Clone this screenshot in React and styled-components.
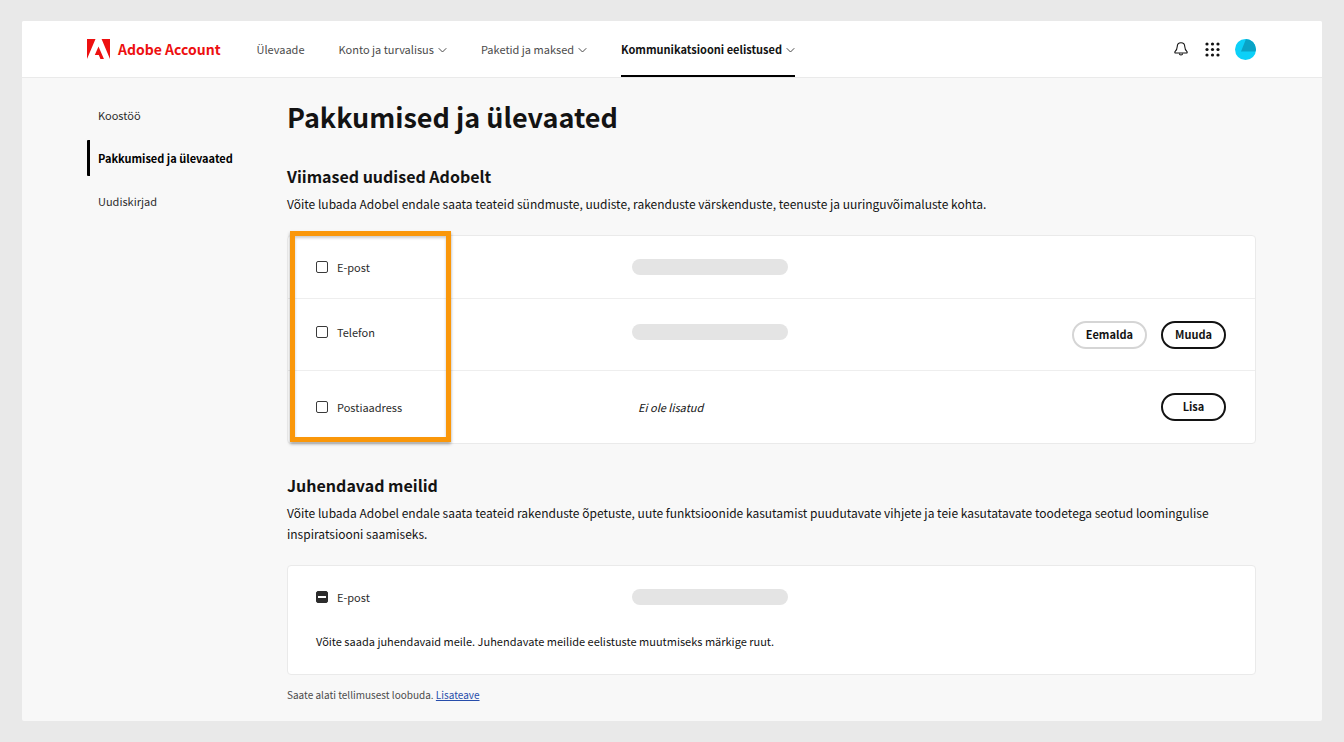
import React, { useEffect, useRef } from "react";
import styled, { createGlobalStyle } from "styled-components";

const GlobalStyle = createGlobalStyle`
  *, *::before, *::after { box-sizing: border-box; }
  body {
    margin: 0;
    background: #e9e9e9;
    color: #131313;
    font-family: "Noto Sans CJK SC", "Noto Sans", sans-serif;
    font-size: 11px;
    line-height: 20px;
  }
  h1, h2, p, ul { margin: 0; padding: 0; }
  ul { list-style: none; }
`;

const Page = styled.div`
  margin: 21px 22px;
  background: #f8f8f8;
  border-radius: 2px;
  overflow: hidden;
`;

const Header = styled.header`
  display: flex;
  align-items: center;
  height: 57px;
  padding: 0 66px 0 65px;
  background: #fff;
  border-bottom: 1px solid #eaeaea;
`;

const Brand = styled.a`
  display: flex;
  align-items: center;
  gap: 8px;
  color: #ed1010;
  font-size: 14px;
  font-weight: 700;
  text-decoration: none;
  white-space: nowrap;
`;

const Nav = styled.nav`
  display: flex;
  flex: 1;
  align-self: stretch;
  gap: 34px;
  margin-left: 36px;
`;

const NavLink = styled.a`
  display: flex;
  align-items: center;
  gap: 4px;
  padding-bottom: 1px;
  border-bottom: 2px solid ${(p) => (p.$active ? "#000" : "transparent")};
  border-top: 2px solid transparent;
  color: ${(p) => (p.$active ? "#131313" : "#4b4b4b")};
  font-weight: ${(p) => (p.$active ? 700 : 400)};
  text-decoration: none;
  white-space: nowrap;
`;

const Tools = styled.div`
  display: flex;
  align-items: center;
  gap: 15px;
`;

const IconButton = styled.button`
  display: flex;
  padding: 0;
  border: 0;
  background: none;
  color: #131313;
  cursor: pointer;
`;

const Columns = styled.div`
  display: grid;
  grid-template-columns: 200px minmax(0, 1fr);
  padding: 19px 66px 16px 65px;
`;

const SideNav = styled.nav`
  display: flex;
  flex-direction: column;
  align-items: flex-start;
  gap: 7px;
`;

const SideLink = styled.a`
  padding-left: 8px;
  border-left: 3px solid ${(p) => (p.$active ? "#000" : "transparent")};
  border-radius: 1px;
  color: ${(p) => (p.$active ? "#000" : "#2c2c2c")};
  font-weight: ${(p) => (p.$active ? 700 : 400)};
  line-height: 36px;
  text-decoration: none;
`;

const Title = styled.h1`
  font-size: 27px;
  line-height: 40px;
`;

const Section = styled.section`
  padding-top: 27px;
  & + & { padding-top: 29px; }
`;

const Heading = styled.h2`
  font-size: 16px;
  line-height: 24px;
`;

const Lead = styled.p`
  margin: 5px 0 21px;
  font-size: 12px;
  line-height: 21px;
`;

const Card = styled.div`
  position: relative;
  background: #fff;
  border: 1px solid #eaeaea;
  border-radius: 4px;
`;

const Highlight = styled.div`
  position: absolute;
  top: -5px;
  left: 2px;
  width: 161px;
  height: 211px;
  border: 5px solid #fa970a;
  box-shadow: 0 2px 3px rgba(0, 0, 0, 0.35), inset 0 2px 3px rgba(0, 0, 0, 0.2);
  pointer-events: none;
`;

const Row = styled.li`
  display: grid;
  grid-template-columns: 316px minmax(0, 1fr);
  align-items: ${(p) => (p.$tall ? "start" : "center")};
  min-height: ${(p) => p.$height}px;
  padding: ${(p) => (p.$tall ? 22 : 20)}px 29px ${(p) => (p.$tall ? 21 : 20)}px 28px;
  border-bottom: 1px solid #eeeeee;
  &:last-child { border-bottom: 0; }
`;

const CheckLabel = styled.label`
  display: flex;
  align-items: center;
  gap: 9px;
  color: #2c2c2c;
  line-height: 22px;
`;

const Checkbox = styled.input`
  appearance: none;
  display: grid;
  place-content: center;
  width: 12px;
  height: 12px;
  margin: 0;
  border: 1px solid #3a3a3a;
  border-radius: 2px;
  background: #fff;
  &:indeterminate { background: #2c2c2c; border-color: #2c2c2c; }
  &:indeterminate::before {
    content: "";
    width: 8px;
    height: 2px;
    background: #fff;
  }
`;

const Details = styled.div`
  display: flex;
  align-items: ${(p) => (p.$tall ? "flex-start" : "center")};
  justify-content: space-between;
`;

const ValueBox = styled.div`
  display: flex;
  align-items: center;
  height: 22px;
`;

const Redacted = styled.span`
  width: 156px;
  height: 16px;
  border-radius: 8px;
  background: #e4e4e4;
`;

const Missing = styled.em`
  padding-left: 6px;
`;

const Actions = styled.div`
  display: flex;
  gap: 14px;
`;

const PillButton = styled.button`
  min-width: 65px;
  height: 28px;
  padding: 0 12px 2px;
  border: 2px solid ${(p) => (p.$quiet ? "#d5d5d5" : "#131313")};
  border-radius: 14px;
  background: #fff;
  color: #131313;
  font: 700 11px/20px "Noto Sans CJK SC", "Noto Sans", sans-serif;
  cursor: pointer;
`;

const Note = styled.p`
  padding: 3px 28px 23px;
`;

const Footnote = styled.p`
  margin-top: 10px;
  font-size: 10px;
  color: #4b4b4b;
  a { color: #274dab; }
`;

function AdobeLogo() {
  return (
    <svg width="23" height="20" viewBox="0 0 30 26" aria-hidden="true" fill="currentColor">
      <path d="M19 0h11v26zM11.1 0H0v26zM15 9.6L22.1 26h-4.6l-2.1-5.2h-5.2z" />
    </svg>
  );
}

function Chevron() {
  return (
    <svg width="9" height="8" viewBox="0 0 9 8" aria-hidden="true" fill="none" stroke="#4b4b4b" strokeLinecap="round">
      <path d="M1 3.5L4.5 7L8 3.5" />
    </svg>
  );
}

function Bell() {
  return (
    <svg width="16" height="14" viewBox="0 0 16 14" aria-hidden="true" fill="none" stroke="currentColor" strokeWidth="1.1" strokeLinejoin="round">
      <path d="M7 .8C4.6.8 3.3 2.5 3.2 4.7 3.1 7.2 2.8 7.8 1.2 9.4.5 10.2.8 11 1.600 11h10.800c.8 0 1.100-.8.4-1.600-1.600-1.600-1.900-2.200-2-4.700C10.700 2.500 9.400.8 7 .8z" />
      <path d="M5.4 11.4a1.6 1.6 0 0 0 3.200 0" />
    </svg>
  );
}

function Dots() {
  const at = [2, 7.5, 13];
  return (
    <svg width="15" height="15" viewBox="0 0 15 15" aria-hidden="true" fill="currentColor">
      {at.map((y) => at.map((x) => <circle key={`${x}-${y}`} cx={x} cy={y} r="1.6" />))}
    </svg>
  );
}

function Avatar() {
  return (
    <svg width="21" height="21" viewBox="0 0 21 21" aria-hidden="true">
      <defs>
        <clipPath id="avatar"><circle cx="10.5" cy="10.5" r="10.5" /></clipPath>
      </defs>
      <g clipPath="url(#avatar)">
        <path fill="#0cd0f8" d="M0 0h21v21H0z" />
        <path fill="#0aa3c6" d="M11 0h10v12.5H6z" />
      </g>
    </svg>
  );
}

function CheckField({ label, mixed }) {
  const ref = useRef(null);
  useEffect(() => {
    ref.current.indeterminate = Boolean(mixed);
  }, [mixed]);
  return (
    <CheckLabel>
      <Checkbox ref={ref} type="checkbox" />
      {label}
    </CheckLabel>
  );
}

export default function App() {
  return (
    <>
      <GlobalStyle />
      <Page>
        <Header>
          <Brand href="#"><AdobeLogo />Adobe Account</Brand>
          <Nav>
            <NavLink href="#">Ülevaade</NavLink>
            <NavLink href="#">Konto ja turvalisus<Chevron /></NavLink>
            <NavLink href="#">Paketid ja maksed<Chevron /></NavLink>
            <NavLink href="#" $active>Kommunikatsiooni eelistused<Chevron /></NavLink>
          </Nav>
          <Tools>
            <IconButton aria-label="Teavitused"><Bell /></IconButton>
            <IconButton aria-label="Rakendused"><Dots /></IconButton>
            <IconButton aria-label="Profiil"><Avatar /></IconButton>
          </Tools>
        </Header>
        <Columns>
          <SideNav>
            <SideLink href="#">Koostöö</SideLink>
            <SideLink href="#" $active>Pakkumised ja ülevaated</SideLink>
            <SideLink href="#">Uudiskirjad</SideLink>
          </SideNav>
          <main>
            <Title>Pakkumised ja ülevaated</Title>
            <Section>
              <Heading>Viimased uudised Adobelt</Heading>
              <Lead>
                Võite lubada Adobel endale saata teateid sündmuste, uudiste, rakenduste värskenduste, teenuste ja uuringuvõimaluste kohta.
              </Lead>
              <Card>
                <ul>
                  <Row $height={63}>
                    <CheckField label="E-post" />
                    <Details><ValueBox><Redacted /></ValueBox></Details>
                  </Row>
                  <Row $height={72} $tall>
                    <CheckField label="Telefon" />
                    <Details $tall>
                      <ValueBox><Redacted /></ValueBox>
                      <Actions>
                        <PillButton $quiet>Eemalda</PillButton>
                        <PillButton>Muuda</PillButton>
                      </Actions>
                    </Details>
                  </Row>
                  <Row $height={72}>
                    <CheckField label="Postiaadress" />
                    <Details>
                      <Missing>Ei ole lisatud</Missing>
                      <PillButton>Lisa</PillButton>
                    </Details>
                  </Row>
                </ul>
                <Highlight />
              </Card>
            </Section>
            <Section>
              <Heading>Juhendavad meilid</Heading>
              <Lead>
                Võite lubada Adobel endale saata teateid rakenduste õpetuste, uute funktsioonide kasutamist puudutavate vihjete ja teie kasutatavate toodetega seotud loomingulise inspiratsiooni saamiseks.
              </Lead>
              <Card>
                <ul>
                  <Row $height={62}>
                    <CheckField label="E-post" mixed />
                    <Details><ValueBox><Redacted /></ValueBox></Details>
                  </Row>
                </ul>
                <Note>Võite saada juhendavaid meile. Juhendavate meilide eelistuste muutmiseks märkige ruut.</Note>
              </Card>
              <Footnote>Saate alati tellimusest loobuda. <a href="#">Lisateave</a></Footnote>
            </Section>
          </main>
        </Columns>
      </Page>
    </>
  );
}
